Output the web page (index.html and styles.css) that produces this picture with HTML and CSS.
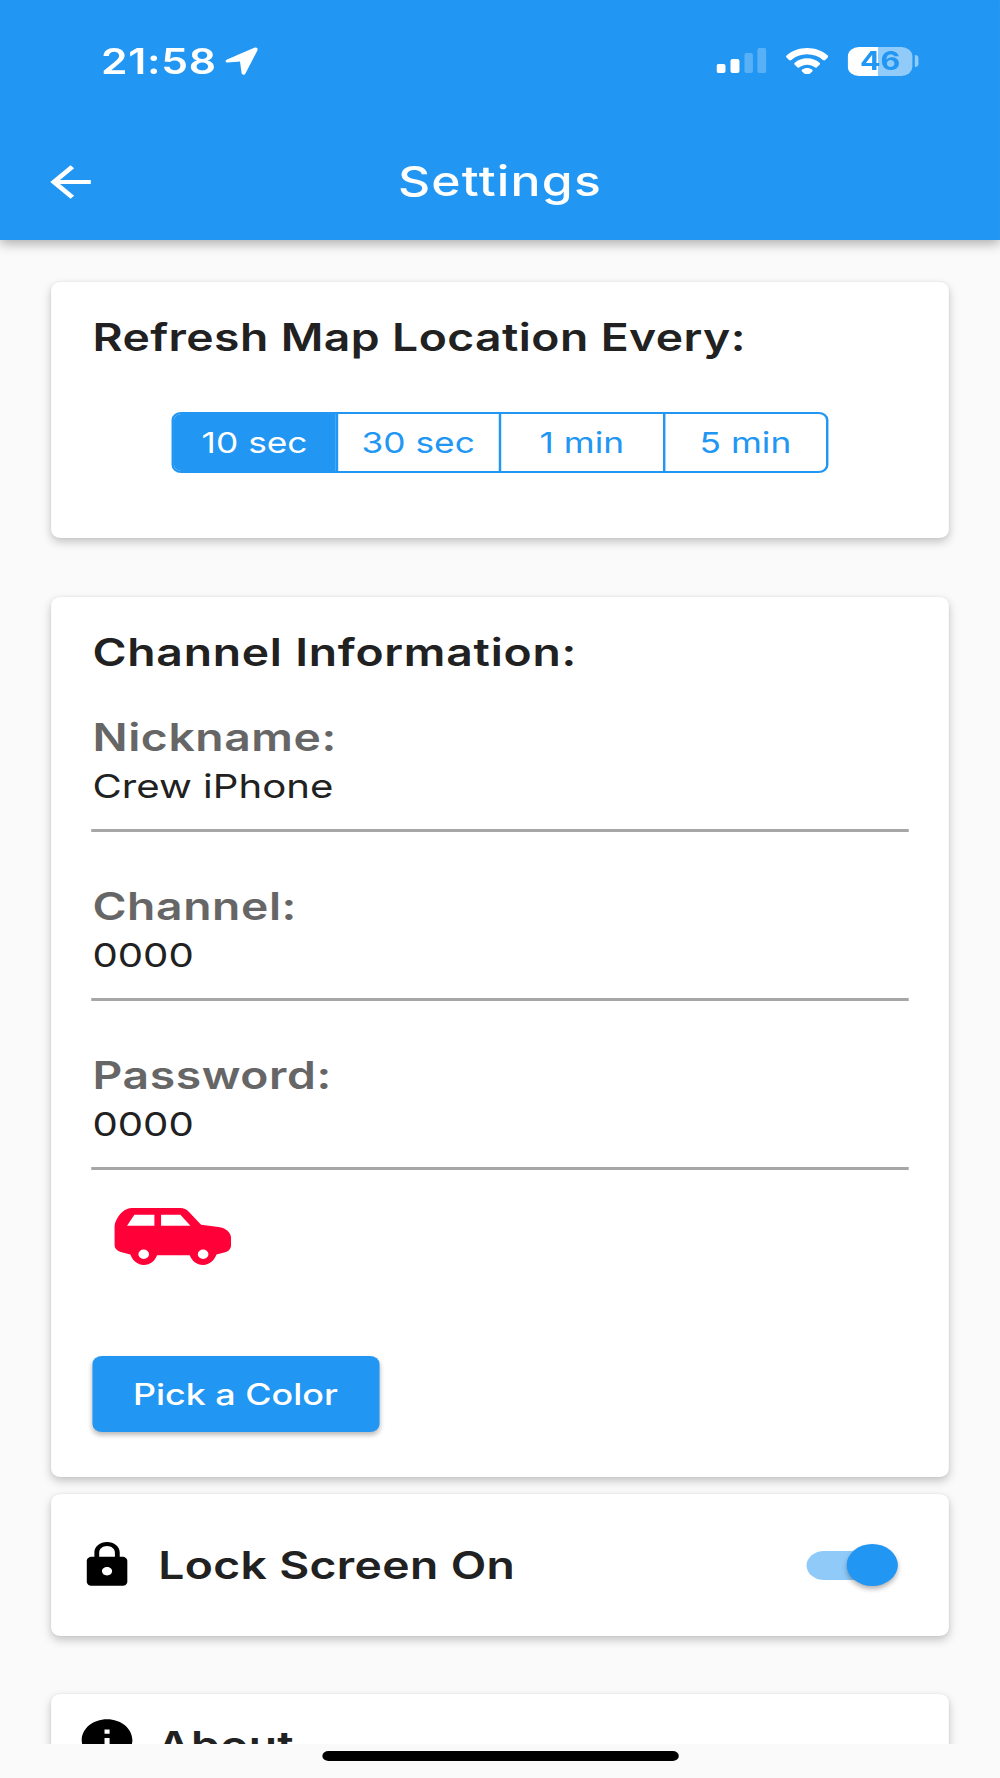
FILE: index.html
```html
<!DOCTYPE html>
<html lang="en">
<head>
<meta charset="utf-8">
<title>Settings</title>
<link rel="stylesheet" href="styles.css">
</head>
<body>
<div class="screen">
  <header class="header">
    <div class="status">
      <div class="status-left">
        <span class="time">21:58</span>
        <svg class="loc" viewBox="0 0 33 28" preserveAspectRatio="none"><path d="M2 12.5 30 .6c1.8-.7 3.3.8 2.6 2.6L20.5 26.6c-.9 1.8-3.5 1.6-3.9-.5L15 14.5 2.6 15.6C.4 15.6-.3 13.6 2 12.5z" fill="#fff"/></svg>
      </div>
      <div class="status-right">
        <svg class="signal" viewBox="0 0 50 25" preserveAspectRatio="none">
          <rect x="0" y="16" width="9" height="9" rx="2" fill="#fff"/>
          <rect x="14" y="11" width="9" height="14" rx="2" fill="#fff"/>
          <rect x="28" y="5" width="8.500" height="20" rx="2" fill="#fff" opacity=".25"/>
          <rect x="41" y="0" width="9" height="25" rx="2" fill="#fff" opacity=".25"/>
        </svg>
        <svg class="wifi" viewBox="0 0 24 16" preserveAspectRatio="none"><path d="M12 0C7.500 0 3.500 1.700.4 4.600c-.4.400-.4.900 0 1.300l1.400 1.500c.3.400.9.400 1.300 0C5.400 5.200 8.500 3.900 12 3.900s6.600 1.300 8.900 3.500c.4.400 1 .4 1.300 0l1.400-1.500c.4-.4.400-.9 0-1.300C20.500 1.700 16.500 0 12 0zm0 6.300c-2.700 0-5.100 1-7 2.700-.4.400-.4.900 0 1.300l1.500 1.500c.3.400.8.400 1.200.1 1.200-1 2.700-1.600 4.300-1.600s3.100.6 4.300 1.600c.4.300.9.300 1.200-.1l1.500-1.500c.4-.4.400-.9 0-1.300-1.900-1.700-4.300-2.700-7-2.700zm0 6c-1 0-2 .4-2.800 1-.4.300-.4.800-.1 1.100l2.300 2.300c.3.300.9.300 1.200 0l2.300-2.300c.3-.3.300-.8-.1-1.100-.8-.6-1.800-1-2.800-1z" fill="#fff"/></svg>
        <div class="battery"><span class="battery-num">46</span></div>
        <span class="battery-cap"></span>
      </div>
    </div>
    <div class="appbar">
      <svg class="back" viewBox="0 0 24 24" preserveAspectRatio="none"><path d="M20 11H7.830l5.590-5.590L12 4l-8 8 8 8 1.410-1.410L7.830 13H20v-2z" fill="#fff"/></svg>
      <h1 class="app-title">Settings</h1>
    </div>
  </header>

  <main class="content">
    <section class="card card-refresh">
      <h2 class="card-title">Refresh Map Location Every:</h2>
      <div class="segments">
        <span class="seg seg-on">10 sec</span>
        <span class="seg">30 sec</span>
        <span class="seg">1 min</span>
        <span class="seg">5 min</span>
      </div>
    </section>

    <section class="card card-channel">
      <h2 class="card-title">Channel Information:</h2>
      <div class="field">
        <div class="field-label">Nickname:</div>
        <div class="field-value">Crew iPhone</div>
      </div>
      <div class="field">
        <div class="field-label">Channel:</div>
        <div class="field-value">0000</div>
      </div>
      <div class="field">
        <div class="field-label">Password:</div>
        <div class="field-value">0000</div>
      </div>
      <svg class="car" viewBox="30 40 350 170" preserveAspectRatio="none"><path fill-rule="evenodd" fill="#ff0038" d="M82 40H228c10 0 18 4 25 11l37 39 52 7c22 3 38 16 38 34v18c0 12-7 20-18 23l-26 7c-6 17-20 31-40 31s-34-13-40-29H158c-6 16-20 29-40 29s-34-14-40-31l-26-7c-14-4-22-12-22-24v-48c0-24 24-60 52-60zM90 60 68 93H150V60zM170 60V93H258L228 60zM118 164a16 14 0 1 0 0 28 16 14 0 1 0 0-28zM296 164a16 14 0 1 0 0 28 16 14 0 1 0 0-28z"/></svg>
      <button class="pick" type="button">Pick a Color</button>
    </section>

    <section class="card card-lock">
      <svg class="row-icon" viewBox="0 0 24 24" preserveAspectRatio="none"><path d="M18 8h-1V6c0-2.760-2.240-5-5-5S7 3.240 7 6v2H6c-1.100 0-2 .9-2 2v10c0 1.100.9 2 2 2h12c1.100 0 2-.9 2-2V10c0-1.100-.9-2-2-2zm-6 9c-1.100 0-2-.9-2-2s.9-2 2-2 2 .9 2 2-.9 2-2 2zm3.100-9H8.900V6c0-1.710 1.390-3.100 3.100-3.100 1.710 0 3.100 1.390 3.100 3.100v2z" fill="#000"/></svg>
      <span class="row-text">Lock Screen On</span>
      <div class="toggle"><span class="thumb"></span></div>
    </section>

    <section class="card card-about">
      <svg class="row-icon info" viewBox="0 0 24 24" preserveAspectRatio="none"><path d="M12 2C6.480 2 2 6.480 2 12s4.480 10 10 10 10-4.480 10-10S17.520 2 12 2zm1 15h-2v-6h2v6zm0-8h-2V7h2v2z" fill="#000"/></svg>
      <span class="row-text">About</span>
    </section>
  </main>

  <footer class="homebar"><span class="indicator"></span></footer>
</div>
</body>
</html>
```
FILE: styles.css
```css
* { box-sizing: border-box; }
html, body { margin: 0; padding: 0; height: 1778px; overflow: hidden; background: #fafafa; }
body { font-family: Inter, "Noto Sans", "Liberation Sans", sans-serif; color: #212121; }

/* The reference is a phone capture stretched sideways: everything is laid out
   in a 822px column, then widened to the 1000px frame. */
.screen {
  width: 822px;
  height: 1778px;
  display: flex;
  flex-direction: column;
  transform: scaleX(1.2165);
  transform-origin: 0 0;
  background: #fafafa;
}

.header {
  flex: none;
  height: 240px;
  background: #2196f3;
  box-shadow: 0 4px 10px rgba(0, 0, 0, .3);
  position: relative;
  z-index: 2;
  color: #fff;
}
.status {
  height: 157px;
  padding: 47px 67px 0 83px;
  display: flex;
  justify-content: space-between;
  align-items: flex-start;
}
.status-left { display: flex; align-items: center; height: 28px; }
.time { font-size: 35px; font-weight: 600; line-height: 28px; letter-spacing: .6px; }
.loc { width: 27px; height: 28px; margin-left: 7px; }
.status-right { display: flex; align-items: flex-start; }
.signal { width: 41px; height: 25px; margin-top: 1px; }
.wifi { width: 35px; height: 26px; margin-left: 16px; margin-top: 1px; }
.battery {
  width: 53px;
  height: 29px;
  margin-left: 16px;
  border-radius: 9px;
  background: linear-gradient(90deg, #fff 0 47%, rgba(255, 255, 255, .5) 47% 100%);
  display: flex;
  align-items: center;
  justify-content: center;
}
.battery-num { font-size: 25px; font-weight: 700; line-height: 29px; color: #2196f3; }
.battery-cap {
  width: 3px;
  height: 12px;
  margin: 8px 0 0 2px;
  border-radius: 0 6px 6px 0;
  background: rgba(255, 255, 255, .5);
}

.appbar { height: 83px; position: relative; display: flex; align-items: flex-start; justify-content: center; }
.back { position: absolute; left: 33px; top: 0; width: 50px; height: 50px; }
.app-title { margin: 0; font-size: 41px; font-weight: 500; line-height: 48px; letter-spacing: 1px; color: #fff; }

.content { flex: 1; min-height: 0; overflow: hidden; padding: 42px 42px 0; }

.card {
  background: #fff;
  border-radius: 8px;
  box-shadow: 0 4px 9px rgba(0, 0, 0, .22), 0 0 2px rgba(0, 0, 0, .07);
}
.card-title { margin: 0; font-size: 38px; font-weight: 600; line-height: 44px; letter-spacing: .35px; color: #212121; }

.card-refresh { height: 256px; padding: 33px 34px 0; margin-bottom: 59px; }
.segments {
  margin: 53px auto 0;
  width: 540px;
  height: 61px;
  display: flex;
  border: 2px solid #2196f3;
  border-radius: 8px;
  overflow: hidden;
}
.seg {
  flex: 1;
  display: flex;
  align-items: center;
  justify-content: center;
  font-size: 29px;
  color: #2196f3;
  border-left: 2px solid #2196f3;
}
.seg-on { background: #2196f3; color: #fff; border-left: 0; }

.card-channel { height: 880px; padding: 33px 34px 0; margin-bottom: 17px; }
.card-channel .card-title { margin-bottom: 40px; letter-spacing: .63px; }
.field { height: 118px; margin: 0 -1px 51px; padding-left: 1px; border-bottom: 3px solid #a6a6a6; }
.field:last-of-type { margin-bottom: 0; }
.field-label { font-size: 38px; font-weight: 600; line-height: 46px; letter-spacing: .5px; color: #666; }
.field-value { font-size: 33px; line-height: 53px; color: #212121; }
.car { display: block; width: 96px; height: 57px; margin: 38px 0 91px 17.500px; }
.pick {
  display: block;
  width: 236px;
  height: 76px;
  margin-left: -.5px;
  padding: 0;
  border: 0;
  border-radius: 8px;
  background: #2196f3;
  color: #fff;
  font: 500 29.500px Inter, "Noto Sans", sans-serif;
  box-shadow: 0 3px 5px rgba(0, 0, 0, .28);
}

.card-lock { height: 142px; padding: 0 42px 0 21px; margin-bottom: 58px; display: flex; align-items: center; }
.row-icon { flex: none; width: 50px; height: 50px; }
.row-text { margin-left: 17px; font-size: 38px; font-weight: 600; line-height: 44px; letter-spacing: .3px; color: #212121; }
.toggle { position: relative; margin-left: auto; width: 75px; height: 29px; border-radius: 15px; background: #90caf9; }
.thumb {
  position: absolute;
  right: 0;
  top: -7px;
  width: 42px;
  height: 42px;
  border-radius: 50%;
  background: #2196f3;
  box-shadow: 0 3px 5px rgba(0, 0, 0, .3);
}

.card-about { height: 142px; padding: 21px 21px 0; display: flex; align-items: flex-start; }
.card-about .row-text { margin-left: 16px; line-height: 60px; }

.homebar { flex: none; height: 34px; position: relative; z-index: 3; background: #fafafa; display: flex; justify-content: center; padding-top: 7px; }
.indicator { width: 293px; height: 10px; border-radius: 5px; background: #000; }
```
